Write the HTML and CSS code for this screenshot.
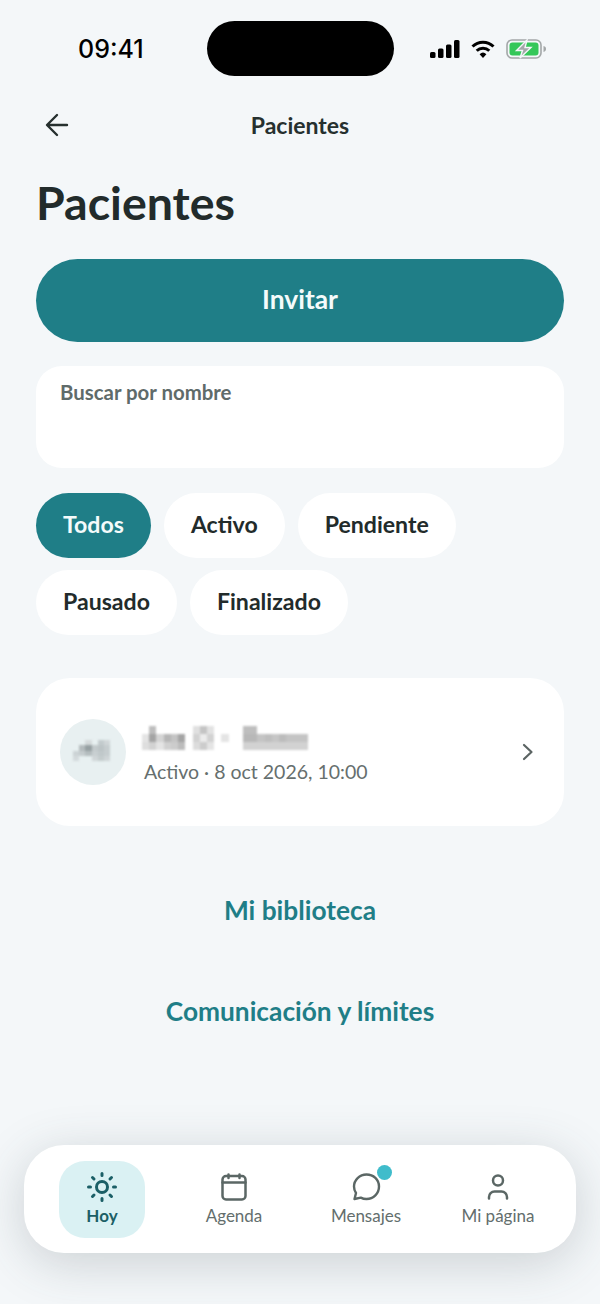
FILE: index.html
```html
<!DOCTYPE html>
<html lang="es">
<head>
    <meta charset="UTF-8">
    <meta name="viewport" content="width=device-width, initial-scale=1.0">
    <title>Pacientes</title>
    <link rel="stylesheet" href="styles.css">
</head>
<body>
    <div class="screen">
        <div class="status-bar">
            <span class="clock">09:41</span>
            <div class="island"></div>
            <div class="status-icons">
                <svg width="30" height="18" viewBox="0 0 30 18" fill="#000">
                    <rect x="0" y="12" width="5.5" height="6" rx="1.5"/>
                    <rect x="8" y="8.5" width="5.5" height="9.5" rx="1.5"/>
                    <rect x="16" y="4.5" width="5.5" height="13.5" rx="1.5"/>
                    <rect x="24" y="0" width="5.5" height="18" rx="1.5"/>
                </svg>
                <svg width="24" height="18" viewBox="0 0 24 18" fill="none" stroke="#000" stroke-width="3">
                    <path d="M1.5 6.5a15 15 0 0 1 21 0"/>
                    <path d="M5.7 10.7a9 9 0 0 1 12.6 0"/>
                    <path d="M12 18l-3.4-3.8a5 5 0 0 1 6.8 0z" fill="#000" stroke="none"/>
                </svg>
                <svg width="41" height="20" viewBox="0 0 41 20">
                    <rect x="1" y="1" width="34" height="18" rx="5" fill="none" stroke="#a3a7a8" stroke-width="1.6"/>
                    <rect x="3.5" y="3.5" width="29" height="13" rx="3" fill="#34c759"/>
                    <path d="M37.500 7c1.800.4 2.500 1.600 2.500 3s-.7 2.600-2.500 3z" fill="#a3a7a8"/>
                    <path d="M21 1L10.5 11.5h6L14 19l11-10.500h-6z" fill="#a3a7a8" stroke="#f4f7f9" stroke-width="1.4"/>
                </svg>
            </div>
        </div>

        <header class="top-bar">
            <button class="back-button">
                <svg width="26" height="26" viewBox="0 0 26 26" fill="none" stroke="#26302f" stroke-width="2.4" stroke-linecap="round" stroke-linejoin="round">
                    <path d="M23 13H3.5M13 3l-10 10 10 10"/>
                </svg>
            </button>
            <span class="top-title">Pacientes</span>
        </header>

        <main class="content">
            <h1>Pacientes</h1>
            <button class="invite-button">Invitar</button>

            <div class="search-box">Buscar por nombre</div>

            <div class="chips">
                <span class="chip chip-active">Todos</span>
                <span class="chip">Activo</span>
                <span class="chip">Pendiente</span>
                <span class="chip">Pausado</span>
                <span class="chip">Finalizado</span>
            </div>

            <div class="patient-card">
                <div class="avatar">
                    <svg class="mosaic avatar-mosaic" width="37" height="21" viewBox="0 0 6 4" preserveAspectRatio="none">
                        <rect x="2" y="0" width="1" height="1" fill="#d5dadb"/>
                        <rect x="4" y="0" width="1" height="1" fill="#c3cbcd"/>
                        <rect x="5" y="0" width="1" height="1" fill="#d0d6d8"/>
                        <rect x="1" y="1" width="1" height="1" fill="#b4bbbd"/>
                        <rect x="2" y="1" width="1" height="1" fill="#96a0a2"/>
                        <rect x="3" y="1" width="1" height="1" fill="#c3cacc"/>
                        <rect x="4" y="1" width="1" height="1" fill="#bcc4c6"/>
                        <rect x="5" y="1" width="1" height="1" fill="#c6cdcf"/>
                        <rect x="0" y="2" width="1" height="1" fill="#ccd3d5"/>
                        <rect x="1" y="2" width="1" height="1" fill="#c4cbcd"/>
                        <rect x="2" y="2" width="1" height="1" fill="#b5bdbf"/>
                        <rect x="3" y="2" width="1" height="1" fill="#c8cfd1"/>
                        <rect x="4" y="2" width="1" height="1" fill="#c0c8ca"/>
                        <rect x="5" y="2" width="1" height="1" fill="#c6cdcf"/>
                        <rect x="0" y="3" width="1" height="1" fill="#d4dadc"/>
                        <rect x="3" y="3" width="1" height="1" fill="#d0d6d8"/>
                        <rect x="4" y="3" width="1" height="1" fill="#c4cccd"/>
                        <rect x="5" y="3" width="1" height="1" fill="#cfd5d7"/>
                    </svg>
                </div>
                <div class="patient-info">
                    <svg class="mosaic" width="166" height="24" viewBox="0 0 23 3" preserveAspectRatio="none">
                        <rect x="1" y="0" width="1" height="1" fill="#bdbdbd"/>
                        <rect x="7" y="0" width="1" height="1" fill="#e0e0e0"/>
                        <rect x="8" y="0" width="1" height="1" fill="#c4c4c4"/>
                        <rect x="9" y="0" width="1" height="1" fill="#e2e2e2"/>
                        <rect x="14" y="0" width="2" height="1" fill="#bebebe"/>
                        <rect x="0" y="1" width="1" height="1" fill="#e4e4e4"/>
                        <rect x="1" y="1" width="1" height="1" fill="#a4a4a4"/>
                        <rect x="2" y="1" width="1" height="1" fill="#d4d4d4"/>
                        <rect x="3" y="1" width="1" height="1" fill="#b6b6b6"/>
                        <rect x="4" y="1" width="1" height="1" fill="#c4c4c4"/>
                        <rect x="5" y="1" width="1" height="1" fill="#a4a4a4"/>
                        <rect x="7" y="1" width="1" height="1" fill="#d2d2d2"/>
                        <rect x="8" y="1" width="1" height="1" fill="#ececec"/>
                        <rect x="9" y="1" width="1" height="1" fill="#d2d2d2"/>
                        <rect x="11" y="1" width="1" height="1" fill="#e4e4e4"/>
                        <rect x="14" y="1" width="2" height="1" fill="#b8b8b8"/>
                        <rect x="16" y="1" width="1" height="1" fill="#c4c4c4"/>
                        <rect x="17" y="1" width="1" height="1" fill="#bebebe"/>
                        <rect x="18" y="1" width="1" height="1" fill="#c6c6c6"/>
                        <rect x="19" y="1" width="1" height="1" fill="#bcbcbc"/>
                        <rect x="20" y="1" width="3" height="1" fill="#c4c4c4"/>
                        <rect x="0" y="2" width="1" height="1" fill="#dedede"/>
                        <rect x="1" y="2" width="1" height="1" fill="#d2d2d2"/>
                        <rect x="2" y="2" width="1" height="1" fill="#e4e4e4"/>
                        <rect x="3" y="2" width="1" height="1" fill="#d0d0d0"/>
                        <rect x="4" y="2" width="1" height="1" fill="#cccccc"/>
                        <rect x="5" y="2" width="1" height="1" fill="#bcbcbc"/>
                        <rect x="7" y="2" width="1" height="1" fill="#dcdcdc"/>
                        <rect x="8" y="2" width="1" height="1" fill="#cccccc"/>
                        <rect x="9" y="2" width="1" height="1" fill="#e4e4e4"/>
                        <rect x="14" y="2" width="9" height="1" fill="#d2d2d2"/>
                    </svg>
                    <div class="patient-meta">Activo · 8 oct 2026, 10:00</div>
                </div>
                <svg class="chevron" width="14" height="20" viewBox="0 0 14 20" fill="none" stroke="#5b6463" stroke-width="2.2" stroke-linecap="round" stroke-linejoin="round">
                    <path d="M3 3l7.5 7L3 17"/>
                </svg>
            </div>

            <a class="text-link link-library">Mi biblioteca</a>
            <a class="text-link link-limits">Comunicación y límites</a>
        </main>

        <nav class="bottom-nav">
            <div class="nav-item nav-item-active">
                <svg width="30" height="30" viewBox="0 0 30 30" fill="none" stroke="#1b5f66" stroke-width="3" stroke-linecap="round">
                    <circle cx="15" cy="15" r="5.500"/>
                    <path d="M15 1.500v2M15 26.500v2M1.500 15h2M26.500 15h2M5.500 5.500l1.500 1.500M23 23l1.500 1.500M5.500 24.500L7 23M23 7l1.500-1.500"/>
                </svg>
                <span>Hoy</span>
            </div>
            <div class="nav-item">
                <svg width="30" height="30" viewBox="0 0 30 30" fill="none" stroke="#5b6765" stroke-width="2.5" stroke-linecap="round" stroke-linejoin="round">
                    <rect x="3.500" y="4" width="23" height="23.500" rx="3.500"/>
                    <path d="M3.500 10.500h23M9.500 2.500V6M20.500 2.500V6"/>
                </svg>
                <span>Agenda</span>
            </div>
            <div class="nav-item">
                <div class="icon-wrap">
                    <svg width="30" height="30" viewBox="0 0 30 30" fill="none" stroke="#5b6765" stroke-width="2.4" stroke-linecap="round" stroke-linejoin="round">
                        <path d="M15.500 2.500C8.500 2.500 3 8 3 14.500c0 2.400.7 4.600 2 6.500l-1.500 6 6.300-1.400c1.700.9 3.600 1.400 5.700 1.400 7 0 12.500-5.500 12.500-12.500S22.500 2.500 15.500 2.500z"/>
                    </svg>
                    <span class="badge"></span>
                </div>
                <span>Mensajes</span>
            </div>
            <div class="nav-item">
                <svg width="30" height="30" viewBox="0 0 30 30" fill="none" stroke="#5b6765" stroke-width="2.5" stroke-linecap="round" stroke-linejoin="round">
                    <circle cx="15" cy="8.500" r="5"/>
                    <path d="M6 26.500V25a5.500 5.500 0 0 1 5.500-5.500h7A5.500 5.500 0 0 1 24 25v1.500"/>
                </svg>
                <span>Mi página</span>
            </div>
        </nav>
    </div>
</body>
</html>
```

FILE: styles.css
```css
* {
    margin: 0;
    padding: 0;
    box-sizing: border-box;
}

body {
    font-family: "Lato", "Noto Sans", sans-serif;
    background-color: #f4f7f9;
    color: #222b2b;
}

.screen {
    width: 600px;
    height: 1304px;
    position: relative;
    overflow: hidden;
    background-color: #f4f7f9;
}

.status-bar {
    height: 94px;
    padding: 21px 53px 0 78px;
    display: flex;
    align-items: flex-start;
}

.clock {
    width: 129px;
    margin-top: 13px;
    font-family: "Inter", sans-serif;
    font-size: 25px;
    line-height: 30px;
    font-weight: 500;
    color: #000;
}

.island {
    width: 187px;
    height: 55px;
    border-radius: 28px;
    background: #000;
}

.status-icons {
    margin-left: 36px;
    margin-top: 18px;
    display: flex;
    align-items: center;
    gap: 11px;
}

.top-bar {
    height: 62px;
    position: relative;
    display: flex;
    align-items: center;
    justify-content: center;
}

.back-button {
    position: absolute;
    left: 44px;
    top: 18px;
    border: none;
    background: none;
    display: flex;
}

.top-title {
    font-size: 23px;
    font-weight: 700;
    color: #26302f;
}

.content {
    padding: 0 36px;
}

h1 {
    font-size: 46.5px;
    line-height: 56px;
    font-weight: 700;
    color: #222b2b;
    margin-top: 18px;
    margin-bottom: 29px;
}

.invite-button {
    display: block;
    width: 100%;
    height: 83px;
    padding-bottom: 4px;
    border: none;
    border-radius: 42px;
    background: #1f7e87;
    color: #f4fbfb;
    font-family: inherit;
    font-size: 26.4px;
    font-weight: 700;
}

.search-box {
    height: 102px;
    margin-top: 24px;
    padding: 14px 24px;
    border-radius: 26px;
    background: #fff;
    font-size: 20.4px;
    line-height: 24px;
    font-weight: 700;
    color: #5f6b6a;
}

.chips {
    margin-top: 25px;
    display: flex;
    flex-wrap: wrap;
    gap: 12px 13px;
}

.chip {
    height: 65px;
    padding: 0 27px 3px;
    border-radius: 33px;
    background: #fff;
    display: flex;
    align-items: center;
    font-size: 23.1px;
    font-weight: 700;
    color: #222b2b;
}

.chip-active {
    background: #1f7e87;
    color: #f4fbfb;
}

.patient-card {
    height: 148px;
    margin-top: 43px;
    padding: 0 29px 0 24px;
    border-radius: 34px;
    background: #fff;
    display: flex;
    align-items: center;
}

.avatar {
    width: 66px;
    height: 66px;
    border-radius: 50%;
    background: #e8f0f1;
    display: flex;
    align-items: center;
    justify-content: center;
}

.mosaic {
    display: block;
    filter: blur(0.8px);
    shape-rendering: crispEdges;
}

.avatar-mosaic {
    margin: 0 3px 4px 0;
}

.patient-info {
    flex: 1;
    margin-left: 16px;
    padding-top: 7px;
}

.patient-meta {
    margin-top: 9px;
    margin-left: 2px;
    font-size: 19.5px;
    line-height: 26px;
    color: #666f6e;
}

.text-link {
    display: block;
    text-align: center;
    font-size: 26.3px;
    line-height: 32px;
    font-weight: 700;
    color: #1f7e87;
}

.link-library {
    margin-top: 68px;
}

.link-limits {
    margin-top: 69px;
}

.bottom-nav {
    position: absolute;
    left: 24px;
    right: 24px;
    bottom: 51px;
    height: 108px;
    padding: 0 12px;
    border-radius: 40px;
    background: #fff;
    box-shadow: 0 10px 50px rgba(60, 75, 80, 0.22);
    display: grid;
    grid-template-columns: repeat(4, 1fr);
    align-items: center;
}

.nav-item {
    height: 77px;
    padding-bottom: 11px;
    display: flex;
    flex-direction: column;
    align-items: center;
    justify-content: flex-end;
    gap: 3px;
    font-size: 17px;
    line-height: 22px;
    color: #636e6d;
}

.nav-item-active {
    width: 86px;
    justify-self: center;
    background: #daf1f3;
    border-radius: 26px;
    color: #1b5f66;
    font-weight: 700;
}

.icon-wrap {
    position: relative;
    display: flex;
}

.badge {
    position: absolute;
    right: -11px;
    top: -7px;
    width: 15px;
    height: 15px;
    border-radius: 50%;
    background: #3fbccb;
}
```
